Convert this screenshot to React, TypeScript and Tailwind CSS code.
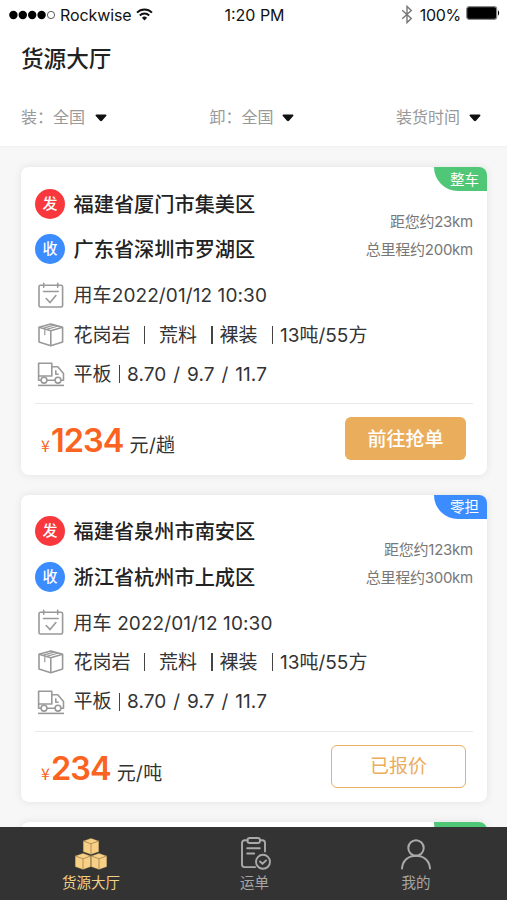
import type { ReactNode } from 'react'

type Cargo = {
  id: number
  tag: string
  tagColor: string
  from: string
  to: string
  distance: string
  mileage: string
  time: string
  price: string
  unit: string
  quoted: boolean
}

const cargos: Cargo[] = [
  {
    id: 1,
    tag: '整车',
    tagColor: 'bg-[#50c776]',
    from: '福建省厦门市集美区',
    to: '广东省深圳市罗湖区',
    distance: '距您约23km',
    mileage: '总里程约200km',
    time: '用车2022/01/12 10:30',
    price: '1234',
    unit: '元/趟',
    quoted: false,
  },
  {
    id: 2,
    tag: '零担',
    tagColor: 'bg-[#3b8cff]',
    from: '福建省泉州市南安区',
    to: '浙江省杭州市上成区',
    distance: '距您约123km',
    mileage: '总里程约300km',
    time: '用车 2022/01/12 10:30',
    price: '234',
    unit: '元/吨',
    quoted: true,
  },
]

export default function App() {
  return (
    <div className="w-[507px] h-[900px] flex flex-col overflow-hidden bg-[#f7f7f7] text-[#333] font-['Inter','Noto_Sans_CJK_SC',sans-serif]">
      <header className="h-[147px] shrink-0 bg-white border-b border-[#f0f0f0]">
        <StatusBar />
        <h1 className="h-[58px] pl-[21px] pt-px flex items-center text-[22.6px] font-medium text-[#222]">货源大厅</h1>
        <div className="h-[60px] pl-[21px] pr-[26px] flex items-center justify-between text-[16px] text-[#999]">
          <Filter label="装：全国" gap="gap-[10px]" />
          <Filter label="卸：全国" gap="gap-[8px]" />
          <Filter label="装货时间" gap="gap-[9px]" />
        </div>
      </header>
      <main className="flex-1 min-h-0 overflow-hidden pt-5 pl-[21px] pr-5 flex flex-col gap-5">
        {cargos.map(c => <CargoCard key={c.id} cargo={c} />)}
        <div className="h-[60px] shrink-0 bg-white rounded-lg shadow-[0_0_8px_rgba(0,0,0,0.09)] flex justify-end items-start">
          <Tag color="bg-[#50c776]" />
        </div>
      </main>
      <nav className="h-[73px] shrink-0 bg-[#333] flex text-[14.5px] text-[#a5a5a5]">
        <NavItem label="货源大厅" className="w-[182px] text-[#f2d083]"><BoxesIcon /></NavItem>
        <NavItem label="运单" className="w-[145px]"><ClipboardIcon /></NavItem>
        <NavItem label="我的" className="w-[178px]"><UserIcon /></NavItem>
      </nav>
    </div>
  )
}

function StatusBar() {
  return (
    <div className="h-[29px] pt-px pl-[9px] pr-[7px] grid grid-cols-[1fr_auto_1fr] items-center text-[16px] text-[#111]">
      <div className="flex items-center">
        <svg className="mb-px" width="47" height="10" viewBox="0 0 47 10">
          {[4.4, 13.8, 23.2, 32.6].map(x => <circle key={x} cx={x} cy="5" r="4.2" fill="#000" />)}
          <circle cx="42" cy="5" r="3.6" fill="none" stroke="#333" strokeWidth="0.8" />
        </svg>
        <span className="ml-1 tracking-[-0.1px]">Rockwise</span>
        <svg className="ml-1 mb-0.5" width="17" height="13" viewBox="0 0 17 13" fill="none" stroke="#111" strokeWidth="1.9">
          <path d="M1 4.6a10.6 10.6 0 0 1 15 0" />
          <path d="M3.8 7.5a6.6 6.6 0 0 1 9.4 0" />
          <path d="M8.5 12.4 5.9 9.7a3.8 3.8 0 0 1 5.2 0z" fill="#111" stroke="none" />
        </svg>
      </div>
      <span className="text-[16px]">1:20 PM</span>
      <div className="flex items-center justify-end">
        <svg className="mb-px" width="12" height="19" viewBox="0 0 12 19" fill="none" stroke="#777" strokeWidth="1.4">
          <path d="M1.2 5.2 10.3 13.5 6 17.6V1.4l4.3 4.1-9.1 8.3" />
        </svg>
        <span className="ml-[7px] tracking-[-0.3px]">100%</span>
        <svg className="ml-[5px] mb-[5px]" width="34" height="14" viewBox="0 0 34 14">
          <rect x="0.7" y="0.7" width="30" height="12.6" rx="2.5" fill="#000" stroke="#888" strokeWidth="1.2" />
          <path d="M32 4.5c1.5.5 1.5 4.5 0 5z" fill="#000" />
        </svg>
      </div>
    </div>
  )
}

function Filter({ label, gap }: { label: string; gap: string }) {
  return (
    <div className={`flex items-center ${gap}`}>
      <span>{label}</span>
      <svg className="mt-px" width="12" height="8" viewBox="0 0 12 8">
        <path d="M1.4 0.6h9.2c.8 0 1.1.8.6 1.4L7 6.8c-.5.6-1.4.6-2 0L.8 2C.3 1.4.6.6 1.4.6z" fill="#111" />
      </svg>
    </div>
  )
}

function CargoCard({ cargo }: { cargo: Cargo }) {
  return (
    <section className="relative h-[307.5px] shrink-0 bg-white rounded-lg shadow-[0_0_8px_rgba(0,0,0,0.09)] pt-[14px] px-[14px]">
      <div className="absolute top-0 right-0"><Tag color={cargo.tagColor}>{cargo.tag}</Tag></div>
      <div className="flex justify-between">
        <div>
          <Place badge="发" color="bg-[#f8383c]" name={cargo.from} />
          <Place badge="收" color="bg-[#3b8cff]" name={cargo.to} />
        </div>
        <div className="pt-[27px] text-right text-[15px] leading-[28px] text-[#777] tracking-[-0.25px]">
          <div>{cargo.distance}</div>
          <div>{cargo.mileage}</div>
        </div>
      </div>
      <div className="pt-[4px] text-[19px]">
        <InfoRow icon={<CalendarIcon />}><span className="tracking-[0.1px]">{cargo.time}</span></InfoRow>
        <InfoRow icon={<PackageIcon />}>
          <span className="w-[70px]">花岗岩</span>
          <Bar />
          <span className="ml-[14px] w-[52px]">荒料</span>
          <Bar />
          <span className="ml-[7px] w-[52px]">裸装</span>
          <Bar />
          <span className="ml-[7px]">13吨/55方</span>
        </InfoRow>
        <InfoRow icon={<TruckIcon />}>
          <span className="w-[45px]">平板</span>
          <Bar />
          <span className="ml-[7px] tracking-[0.1px] [word-spacing:1.4px]">8.70 / 9.7 / 11.7</span>
        </InfoRow>
      </div>
      <div className="mt-[9.5px] pl-[6px] pr-[7px] pt-[13px] border-t border-[#e8e8e8] flex justify-between">
        <div className="flex items-baseline whitespace-pre pt-[4px]">
          <span className="text-[16px] text-[#fa6320] font-['Noto_Sans_CJK_SC',sans-serif]">¥</span>
          <span className="ml-px text-[32.5px] leading-[40px] font-semibold tracking-[-0.9px] text-[#fa6320]">{cargo.price}</span>
          <span className="ml-[6px] text-[19px] tracking-[0.3px]">{cargo.unit}</span>
        </div>
        {cargo.quoted ? (
          <button className="w-[135px] h-[43px] pt-px rounded-md border-[1.5px] border-[#eab060] text-[#eaad5c] text-[19px]">已报价</button>
        ) : (
          <button className="w-[121px] h-[43px] pt-0.5 rounded-md bg-[#eaad5c] text-white text-[19px] font-medium">前往抢单</button>
        )}
      </div>
    </section>
  )
}

function Tag({ color, children }: { color: string; children?: ReactNode }) {
  return (
    <div className={`w-[53px] h-6 pl-2 pt-px rounded-tr-lg rounded-bl-[24px] flex items-center justify-center text-[14.5px] text-white ${color}`}>
      {children}
    </div>
  )
}

function Place({ badge, color, name }: { badge: string; color: string; name: string }) {
  return (
    <div className="h-[45.5px] flex items-center">
      <span className={`w-[30px] h-[30px] rounded-full flex items-center justify-center text-white text-[15px] font-medium ${color}`}>{badge}</span>
      <span className="ml-[8.5px] pt-[2px] text-[20.2px] font-medium text-[#222]">{name}</span>
    </div>
  )
}

function InfoRow({ icon, children }: { icon: ReactNode; children: ReactNode }) {
  return (
    <div className="h-[39.3px] flex items-center whitespace-pre">
      <span className="w-[38.5px] shrink-0">{icon}</span>
      <div className="flex items-center pt-[2px]">{children}</div>
    </div>
  )
}

function Bar() {
  return <span className="w-[1.5px] h-[18px] mb-0.5 shrink-0 bg-[#444]" />
}

function NavItem({ label, className, children }: { label: string; className: string; children: ReactNode }) {
  return (
    <div className={`pt-[10px] flex flex-col items-center ${className}`}>
      <span className="h-9">{children}</span>
      <span className="leading-[20px]">{label}</span>
    </div>
  )
}

function CalendarIcon() {
  return (
    <svg width="30" height="28" viewBox="0 0 30 28" fill="none" stroke="#999" strokeWidth="1.6" strokeLinecap="round">
      <rect x="4" y="3.2" width="23.6" height="21.8" rx="1.5" />
      <path d="M8.7 1.2v4M22.7 1.2v4M8.5 9.5h14.7" />
      <path d="m11.2 16.5 3.8 4 5.9-7" />
    </svg>
  )
}

function PackageIcon() {
  return (
    <svg width="30" height="28" viewBox="0 0 30 28" fill="none" stroke="#999" strokeWidth="1.6" strokeLinejoin="round">
      <path d="M15.8 2.9 27.6 6.3V21l-11.8 3.8L4 21V6.3z" />
      <path d="m4 6.3 11.8 3.5 11.8-3.5M15.8 9.8v15" />
      <path d="m8.6 7.2 11.2-3.3M12.300 8.200l11.200-3.200M9.800 8.500v5.700" strokeWidth="1.2" />
    </svg>
  )
}

function TruckIcon() {
  return (
    <svg width="30" height="28" viewBox="0 0 30 28" fill="none" stroke="#999" strokeWidth="1.6" strokeLinejoin="round">
      <path d="M6 20.300H3.600V3.200h13.200v12.800H3.600" />
      <path d="M16.800 6.800h6l5.700 6.600v6.900h-2.700M12 20.300h8.200M20.800 10.300v4h2.800" />
      <circle cx="9" cy="20.200" r="2.900" />
      <circle cx="23" cy="20.200" r="2.900" />
      <path d="M3 25.400h26" />
    </svg>
  )
}

function BoxesIcon() {
  return (
    <svg width="34" height="34" viewBox="0 0 34 34" strokeLinejoin="round">
      {[[9, 1], [1, 16], [17, 16]].map(([x, y]) => (
        <g key={x} transform={`translate(${x} ${y})`}>
          <path d="M8 .3 15.800 3v10.800L8 16.500.2 13.800V3z" fill="#f7d086" stroke="#6b5738" strokeWidth="0.3" />
          <path d="M.3 3 8 5.800 15.700 3M8 5.800v10.700" fill="none" stroke="#9d814f" strokeWidth="0.8" />
        </g>
      ))}
    </svg>
  )
}

function ClipboardIcon() {
  return (
    <svg className="-mt-px" width="34" height="36" viewBox="0 0 34 36" fill="none" stroke="#aaa" strokeWidth="1.9" strokeLinecap="round" strokeLinejoin="round">
      <path d="M9.500 4.300H6.800c-1.700 0-2.800 1-2.800 2.700v21.500c0 1.600 1 2.600 2.700 2.600h10.500M22 4.300h2.300c1.700 0 2.700 1 2.700 2.700v8.500" />
      <rect x="9.500" y="2" width="12.500" height="5" rx="2.300" />
      <path d="M9.200 12.300h12.600M9.200 17.500h7" />
      <circle cx="25" cy="25.800" r="7" />
      <path d="m22 25.500 2.500 2.300 3.600-3.400" />
    </svg>
  )
}

function UserIcon() {
  return (
    <svg className="mt-[2px]" width="32" height="32" viewBox="0 0 32 32" fill="none" stroke="#aaa" strokeWidth="2" strokeLinecap="round">
      <circle cx="16" cy="9" r="7.700" />
      <path d="M2 29.500c.5-7.500 6-12.800 14-12.800s13.500 5.300 14 12.800" />
    </svg>
  )
}
